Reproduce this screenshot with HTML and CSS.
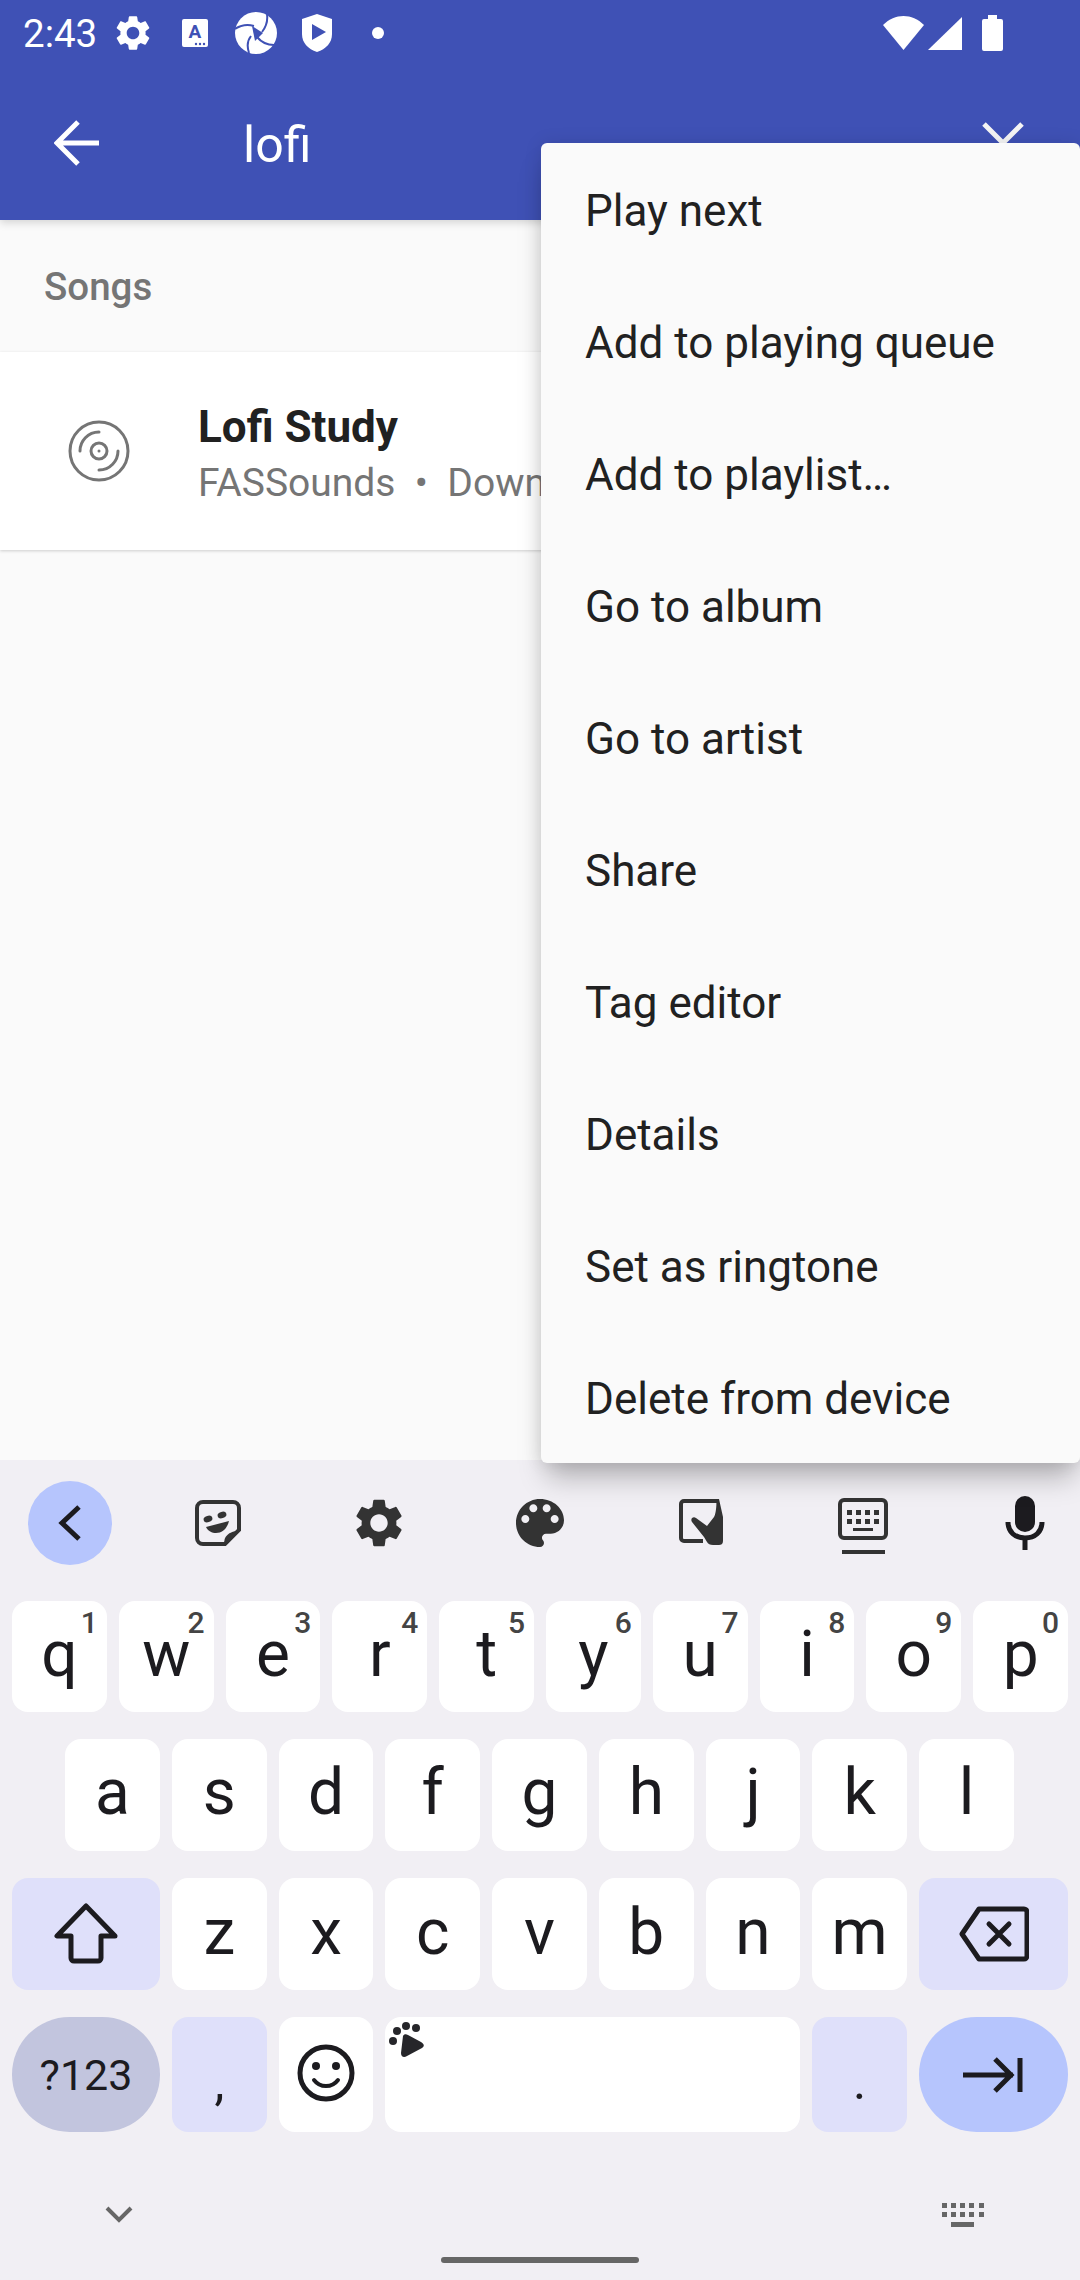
FILE: index.html
```html
<!DOCTYPE html>
<html lang="en">
<head>
    <meta charset="UTF-8">
    <meta name="viewport" content="width=device-width, initial-scale=1.0">
    <title>Search</title>
    <link rel="stylesheet" href="styles.css">
</head>
<body>
    <div class="phone">
        <header class="top">
            <div class="status">
                <span class="time">2:43</span>
                <svg class="st-gear" viewBox="0 0 24 24"><path fill="#fff" d="M19.14,12.94c0.04-0.3,0.06-0.61,0.06-0.94c0-0.32-0.02-0.64-0.07-0.94l2.03-1.58c0.18-0.14,0.23-0.41,0.12-0.61 l-1.92-3.32c-0.12-0.22-0.37-0.29-0.59-0.22l-2.39,0.96c-0.5-0.38-1.03-0.7-1.62-0.94L14.4,2.81c-0.04-0.24-0.24-0.41-0.48-0.41 h-3.84c-0.24,0-0.43,0.17-0.47,0.41L9.25,5.35C8.66,5.59,8.12,5.92,7.63,6.29L5.24,5.33c-0.22-0.08-0.47,0-0.59,0.22L2.74,8.87 C2.62,9.08,2.66,9.34,2.86,9.48l2.03,1.58C4.84,11.36,4.8,11.69,4.8,12s0.02,0.64,0.07,0.94l-2.03,1.58 c-0.18,0.14-0.23,0.41-0.12,0.61l1.92,3.32c0.12,0.22,0.37,0.29,0.59,0.22l2.39-0.96c0.5,0.38,1.03,0.7,1.62,0.94l0.36,2.54 c0.05,0.24,0.24,0.41,0.48,0.41h3.84c0.24,0,0.44-0.17,0.47-0.41l0.36-2.54c0.59-0.24,1.13-0.56,1.62-0.94l2.39,0.96 c0.22,0.08,0.47,0,0.59-0.22l1.92-3.32c0.12-0.22,0.07-0.47-0.12-0.61L19.14,12.94z M12,15.6c-1.98,0-3.6-1.62-3.6-3.6 s1.62-3.6,3.6-3.6s3.6,1.62,3.6,3.6S13.98,15.6,12,15.6z"/></svg>
                <svg class="st-card" viewBox="0 0 26 28">
                    <rect width="26" height="28" rx="2" fill="#fff"/>
                    <text x="13" y="19" text-anchor="middle" class="st-card-a">A</text>
                    <circle cx="14" cy="25" r="1.2" fill="#3f51b5"/><circle cx="18" cy="25" r="1.2" fill="#3f51b5"/><circle cx="22" cy="25" r="1.2" fill="#3f51b5"/>
                </svg>
                <svg class="st-swirl" viewBox="0 0 42 42">
                    <circle cx="21" cy="21" r="21" fill="#fff"/>
                    <path fill="#3f51b5" d="M17 14l11 7-8 8z"/>
                    <path fill="none" stroke="#3f51b5" stroke-width="2" d="M0 17c6-4 12-5 19-3M32 2c1 7-1 13-5 18M39 33c-7 0-12-2-17-8M14 41c-2-6-2-12 2-17"/>
                </svg>
                <svg class="st-shield" viewBox="0 0 32 38">
                    <path fill="#fff" d="M16 0l15 5v15c0 9-6 15-15 18C7 35 1 29 1 20V5z"/>
                    <path fill="#3f51b5" d="M11 10l14 8-14 8z"/>
                </svg>
                <span class="st-dot"></span>
                <span class="st-right">
                    <svg class="st-wifi" viewBox="0 0 41 34"><path fill="#fff" d="M0 9c12-12 29-12 41 0L20.500 34z"/></svg>
                    <svg class="st-signal" viewBox="0 0 34 33"><path fill="#fff" d="M34 0v33H0z"/></svg>
                    <svg class="st-batt" viewBox="0 0 21 36"><path fill="#fff" d="M6 0h9v4h4a2 2 0 0 1 2 2v28a2 2 0 0 1-2 2H2a2 2 0 0 1-2-2V6a2 2 0 0 1 2-2h4z"/></svg>
                </span>
            </div>
            <div class="appbar">
                <svg class="ab-back" viewBox="0 0 46 46"><path fill="none" stroke="#fff" stroke-width="5" d="M45 23H4M24 2L3 23l21 21"/></svg>
                <span class="ab-query">lofi</span>
                <svg class="ab-close" viewBox="0 0 46 46"><path fill="none" stroke="#f5f5f5" stroke-width="5" d="M4 4l38 38M42 4L4 42"/></svg>
            </div>
        </header>

        <main class="results">
            <div class="section-title">Songs</div>
            <div class="song">
                <svg class="song-icon" viewBox="0 0 66 66">
                    <g fill="none" stroke="#757575" stroke-width="3" stroke-linecap="round">
                        <circle cx="33" cy="33" r="29"/>
                        <circle cx="33" cy="33" r="8"/>
                        <path d="M14 33c0-10 8-19 19-19M52 33c0 10-8 19-19 19"/>
                    </g>
                    <circle cx="33" cy="33" r="1.500" fill="#757575"/>
                </svg>
                <div class="song-text">
                    <div class="song-name">Lofi Study</div>
                    <div class="song-sub">FASSounds &nbsp;•&nbsp; Down</div>
                </div>
            </div>
        </main>

        <div class="keyboard">
            <div class="kb-tools">
                <button class="tool-back">
                    <svg width="24" height="36" viewBox="0 0 24 36"><path fill="none" stroke="#1c1b1f" stroke-width="5" d="M21 2L4 18l17 16"/></svg>
                </button>
                <span class="tool">
                    <svg width="46" height="46" viewBox="0 0 46 46">
                        <path fill="none" stroke="#333" stroke-width="4" d="M30 44H8a6 6 0 0 1-6-6V8a6 6 0 0 1 6-6h30a6 6 0 0 1 6 6v22z"/>
                        <path fill="#333" d="M44 31L30 46c-3-9 4-15 14-15z"/>
                        <ellipse cx="13" cy="19" rx="4.500" ry="3.200" fill="#333" transform="rotate(-15 13 19)"/>
                        <ellipse cx="27" cy="15" rx="4.500" ry="3.200" fill="#333" transform="rotate(-15 27 15)"/>
                        <path fill="#333" d="M11 27l23-6c-2 8-7 12-13 12-4 0-8-2-10-6z"/>
                    </svg>
                </span>
                <span class="tool">
                    <svg width="58" height="58" viewBox="0 0 24 24"><path fill="#333" d="M19.14,12.94c0.04-0.3,0.06-0.61,0.06-0.94c0-0.32-0.02-0.64-0.07-0.94l2.03-1.58c0.18-0.14,0.23-0.41,0.12-0.61 l-1.92-3.32c-0.12-0.22-0.37-0.29-0.59-0.22l-2.39,0.96c-0.5-0.38-1.03-0.7-1.62-0.94L14.4,2.81c-0.04-0.24-0.24-0.41-0.48-0.41 h-3.84c-0.24,0-0.43,0.17-0.47,0.41L9.25,5.35C8.66,5.59,8.12,5.92,7.63,6.29L5.24,5.33c-0.22-0.08-0.47,0-0.59,0.22L2.74,8.87 C2.62,9.08,2.66,9.34,2.86,9.48l2.03,1.58C4.84,11.36,4.8,11.69,4.8,12s0.02,0.64,0.07,0.94l-2.03,1.58 c-0.18,0.14-0.23,0.41-0.12,0.61l1.92,3.32c0.12,0.22,0.37,0.29,0.59,0.22l2.39-0.96c0.5,0.38,1.03,0.7,1.62,0.94l0.36,2.54 c0.05,0.24,0.24,0.41,0.48,0.41h3.84c0.24,0,0.44-0.17,0.47-0.41l0.36-2.54c0.59-0.24,1.13-0.56,1.62-0.94l2.39,0.96 c0.22,0.08,0.47,0,0.59-0.22l1.92-3.32c0.12-0.22,0.07-0.47-0.12-0.61L19.14,12.94z M12,15.6c-1.98,0-3.6-1.62-3.6-3.6 s1.62-3.6,3.6-3.6s3.6,1.62,3.6,3.6S13.98,15.6,12,15.6z"/></svg>
                </span>
                <span class="tool">
                    <svg width="64" height="64" viewBox="0 0 24 24"><path fill="#333" d="M12 3c-4.97 0-9 4.03-9 9s4.03 9 9 9c.83 0 1.5-.67 1.5-1.5 0-.39-.15-.74-.39-1.01-.23-.26-.38-.61-.38-.99 0-.83.67-1.5 1.5-1.5H16c2.76 0 5-2.24 5-5 0-4.42-4.03-8-9-8zm-5.500 9c-.83 0-1.5-.67-1.5-1.5S5.670 9 6.500 9 8 9.670 8 10.500 7.330 12 6.500 12zm3-4C8.670 8 8 7.330 8 6.500S8.670 5 9.500 5s1.500.67 1.500 1.500S10.330 8 9.500 8zm5 0c-.83 0-1.500-.67-1.500-1.500S13.670 5 14.500 5s1.500.67 1.500 1.500S15.330 8 14.500 8zm3 4c-.83 0-1.500-.67-1.500-1.500S16.670 9 17.500 9s1.500.67 1.500 1.500-.67 1.500-1.500 1.500z"/></svg>
                </span>
                <span class="tool">
                    <svg width="46" height="48" viewBox="0 0 46 48">
                        <path fill="none" stroke="#333" stroke-width="4" d="M24 42H5a3 3 0 0 1-3-3V5a3 3 0 0 1 3-3h34"/>
                        <path fill="#333" d="M37 0h3l4 18v24c0 3-2 4-4 4h-6c-3 0-5-1-6-3l-3-5-12-15c-2-3 1-6 4-4l11 8 7-9c2-3 3-14 2-18z"/>
                    </svg>
                </span>
                <span class="tool">
                    <svg class="tool-kbd" width="50" height="58" viewBox="0 0 50 58">
                        <rect x="2" y="2" width="46" height="38" rx="4" fill="none" stroke="#333" stroke-width="4"/>
                        <g fill="#333">
                            <rect x="9" y="12" width="5" height="5"/><rect x="18" y="12" width="5" height="5"/><rect x="27" y="12" width="5" height="5"/><rect x="36" y="12" width="5" height="5"/>
                            <rect x="9" y="21" width="5" height="5"/><rect x="18" y="21" width="5" height="5"/><rect x="27" y="21" width="5" height="5"/><rect x="36" y="21" width="5" height="5"/>
                            <rect x="15" y="30" width="20" height="3"/>
                            <rect x="4" y="52" width="43" height="4"/>
                        </g>
                    </svg>
                </span>
                <span class="tool">
                    <svg width="40" height="54" viewBox="0 0 40 54">
                        <rect x="10" y="0" width="20" height="36" rx="10" fill="#1c1b1f"/>
                        <path fill="none" stroke="#1c1b1f" stroke-width="5" d="M3 26c0 10 7 16 17 16s17-6 17-16M20 42v12"/>
                    </svg>
                </span>
            </div>

            <div class="row row-top">
                <button class="key">q<sup>1</sup></button>
                <button class="key">w<sup>2</sup></button>
                <button class="key">e<sup>3</sup></button>
                <button class="key">r<sup>4</sup></button>
                <button class="key">t<sup>5</sup></button>
                <button class="key">y<sup>6</sup></button>
                <button class="key">u<sup>7</sup></button>
                <button class="key">i<sup>8</sup></button>
                <button class="key">o<sup>9</sup></button>
                <button class="key">p<sup>0</sup></button>
            </div>
            <div class="row row-home">
                <button class="key">a</button>
                <button class="key">s</button>
                <button class="key">d</button>
                <button class="key">f</button>
                <button class="key">g</button>
                <button class="key">h</button>
                <button class="key">j</button>
                <button class="key">k</button>
                <button class="key">l</button>
            </div>
            <div class="row row-wide">
                <button class="key fn">
                    <svg width="64" height="62" viewBox="0 0 64 62"><path fill="none" stroke="#1c1b1f" stroke-width="5" stroke-linejoin="round" d="M32 3L3 33h14v22a3 3 0 0 0 3 3h24a3 3 0 0 0 3-3V33h14z"/></svg>
                </button>
                <button class="key">z</button>
                <button class="key">x</button>
                <button class="key">c</button>
                <button class="key">v</button>
                <button class="key">b</button>
                <button class="key">n</button>
                <button class="key">m</button>
                <button class="key fn">
                    <svg width="70" height="56" viewBox="0 0 70 56">
                        <path fill="none" stroke="#1c1b1f" stroke-width="5" stroke-linejoin="round" d="M20 3h45a3 3 0 0 1 3 3v44a3 3 0 0 1-3 3H20L3 28z"/>
                        <path fill="none" stroke="#1c1b1f" stroke-width="5" stroke-linecap="round" d="M30 18l20 20M50 18L30 38"/>
                    </svg>
                </button>
            </div>
            <div class="row row-wide row-last">
                <button class="key pill">?123</button>
                <button class="key fn punct">,</button>
                <button class="key">
                    <svg width="58" height="58" viewBox="0 0 58 58">
                        <circle cx="29" cy="29" r="26" fill="none" stroke="#1c1b1f" stroke-width="5"/>
                        <circle cx="19" cy="22" r="4" fill="#1c1b1f"/><circle cx="39" cy="22" r="4" fill="#1c1b1f"/>
                        <path fill="none" stroke="#1c1b1f" stroke-width="4" stroke-linecap="round" d="M17 36c6 8 18 8 24 0"/>
                    </svg>
                </button>
                <button class="key space">
                    <svg class="paw" width="36" height="36" viewBox="0 0 36 36">
                        <g fill="#26262a">
                            <circle cx="8" cy="9" r="4"/><circle cx="17" cy="4" r="4"/><circle cx="27" cy="6" r="4"/><circle cx="4" cy="19" r="4"/>
                            <path d="M14 14c1-2 3-2 5-1l13 7c3 2 4 4 1 6l-15 8c-3 2-6 1-6-3z"/>
                        </g>
                    </svg>
                </button>
                <button class="key fn punct">.</button>
                <button class="key pill enter">
                    <svg width="60" height="36" viewBox="0 0 60 36"><path fill="none" stroke="#1c1b1f" stroke-width="5" d="M0 18h50M32 2l16 16-16 16M57 1v34"/></svg>
                </button>
            </div>

            <div class="kb-foot">
                <div class="foot-icons">
                    <svg width="28" height="18" viewBox="0 0 28 18"><path fill="none" stroke="#666" stroke-width="4" d="M2 2l12 12L26 2"/></svg>
                    <svg width="42" height="24" viewBox="0 0 42 24">
                        <g fill="#666">
                            <rect x="0" y="0" width="5" height="5"/><rect x="9" y="0" width="5" height="5"/><rect x="18" y="0" width="5" height="5"/><rect x="27" y="0" width="5" height="5"/><rect x="37" y="0" width="5" height="5"/>
                            <rect x="0" y="9" width="5" height="5"/><rect x="9" y="9" width="5" height="5"/><rect x="18" y="9" width="5" height="5"/><rect x="27" y="9" width="5" height="5"/><rect x="37" y="9" width="5" height="5"/>
                            <rect x="9" y="19" width="23" height="5"/>
                        </g>
                    </svg>
                </div>
                <div class="handle"></div>
            </div>
        </div>

        <ul class="menu">
            <li>Play next</li>
            <li>Add to playing queue</li>
            <li>Add to playlist…</li>
            <li>Go to album</li>
            <li>Go to artist</li>
            <li>Share</li>
            <li>Tag editor</li>
            <li>Details</li>
            <li>Set as ringtone</li>
            <li>Delete from device</li>
        </ul>
    </div>
</body>
</html>
```

FILE: styles.css
```css
body {
    margin: 0;
    font-family: Roboto, "Liberation Sans", sans-serif;
    background-color: #fafafa;
}

.phone {
    position: relative;
    width: 1080px;
    height: 2280px;
    overflow: hidden;
    display: flex;
    flex-direction: column;
}

/* top bars */
.top {
    height: 220px;
    flex-shrink: 0;
    background-color: #3f51b5;
    color: white;
    position: relative;
    z-index: 1;
    box-shadow: 0 3px 8px rgba(0, 0, 0, 0.15);
}

.status {
    height: 66px;
    display: flex;
    align-items: center;
    padding-left: 23px;
}

.time {
    font-size: 38.5px;
    width: 89px;
}

.st-gear {
    width: 42px;
    height: 42px;
}

.st-card {
    width: 26px;
    height: 28px;
    margin-left: 28px;
}

.st-card-a {
    font-size: 19px;
    font-weight: 700;
    fill: #3f51b5;
}

.st-swirl {
    width: 42px;
    height: 42px;
    margin-left: 27px;
}

.st-shield {
    width: 32px;
    height: 38px;
    margin-left: 24px;
}

.st-dot {
    width: 12px;
    height: 12px;
    border-radius: 50%;
    background-color: white;
    margin-left: 39px;
}

.st-right {
    margin-left: auto;
    margin-right: 77px;
    display: flex;
    align-items: center;
}

.st-wifi {
    width: 41px;
    height: 34px;
}

.st-signal {
    width: 34px;
    height: 33px;
    margin-left: 4px;
}

.st-batt {
    width: 21px;
    height: 36px;
    margin-left: 20px;
}

.appbar {
    height: 154px;
    display: flex;
    align-items: center;
    padding-left: 54px;
}

.ab-back {
    width: 46px;
    height: 46px;
}

.ab-query {
    font-size: 50px;
    margin-left: 143px;
    padding-top: 3px;
}

.ab-close {
    width: 46px;
    height: 46px;
    margin-left: auto;
    margin-right: 54px;
}

/* results list */
.results {
    height: 1240px;
    flex-shrink: 0;
    background-color: #fafafa;
}

.section-title {
    height: 132px;
    line-height: 134px;
    padding-left: 44px;
    font-size: 38.5px;
    font-weight: 500;
    color: #757575;
}

.song {
    height: 198px;
    display: flex;
    align-items: center;
    background-color: white;
    box-shadow: 0 1px 3px rgba(0, 0, 0, 0.18);
}

.song-icon {
    width: 66px;
    height: 66px;
    margin-left: 66px;
}

.song-text {
    margin-left: 66px;
    padding-top: 4px;
    white-space: nowrap;
}

.song-name {
    font-size: 44px;
    font-weight: 700;
    color: #212121;
}

.song-sub {
    font-size: 39px;
    color: #757575;
    margin-top: 7px;
}

/* overflow menu */
.menu {
    position: absolute;
    z-index: 2;
    top: 143px;
    left: 541px;
    width: 539px;
    margin: 0;
    padding: 0;
    list-style: none;
    background-color: #fafafa;
    border-radius: 6px;
    box-shadow: 0 20px 26px -6px rgba(0, 0, 0, 0.26), 0 0 18px rgba(0, 0, 0, 0.1);
}

.menu li {
    height: 132px;
    line-height: 137px;
    padding-left: 44px;
    font-size: 44px;
    color: #212121;
}

/* keyboard */
.keyboard {
    flex: 1;
    background-color: #f1eff4;
}

.kb-tools {
    height: 141px;
    box-sizing: border-box;
    padding: 21px 0 36px 28px;
    display: flex;
    align-items: center;
}

.kb-tools button {
    border: none;
    padding: 0;
    font: inherit;
    flex-shrink: 0;
}

.tool-back {
    width: 84px;
    height: 84px;
    border-radius: 50%;
    background-color: #b6c5fd;
    margin-right: 25px;
    display: flex;
    align-items: center;
    justify-content: center;
}

.tool {
    width: 161.4px;
    flex-shrink: 0;
    display: flex;
    justify-content: center;
}

.tool-kbd {
    margin-top: 8px;
}

.row {
    display: grid;
    gap: 12px;
    height: 111px;
    padding: 0 12px;
    margin-bottom: 27px;
}

.row-top {
    grid-template-columns: repeat(10, 1fr);
}

.row-home {
    height: 112px;
    padding: 0 66px 0 65px;
    grid-template-columns: repeat(9, 1fr);
}

.row-wide {
    height: 112px;
    grid-template-columns: 148px repeat(7, 1fr) 149px;
}

.row-last {
    height: 115px;
    margin-bottom: 0;
}

.key {
    position: relative;
    border: none;
    padding: 0 0 5px;
    margin: 0;
    min-width: 0;
    border-radius: 16px;
    background-color: white;
    color: #1c1b1f;
    font-family: Roboto, sans-serif;
    font-size: 64px;
    display: flex;
    align-items: center;
    justify-content: center;
}

.row-wide .key {
    padding-bottom: 3px;
}

.key sup {
    position: absolute;
    top: 4px;
    right: 9px;
    font-size: 30px;
    line-height: 35px;
    font-weight: 500;
    color: #444;
}

.row-wide .fn {
    padding: 0;
}

.fn {
    background-color: #dfe0fa;
}

.row-wide .punct {
    font-size: 50px;
    padding: 14px 0 0;
}

.row-wide .pill {
    background-color: #c2c5de;
    border-radius: 58px;
    font-size: 43px;
    padding: 0;
}

.row-wide .enter {
    background-color: #b6c5fd;
}

.row-wide .space {
    grid-column: span 4;
    padding: 0;
}

.paw {
    position: absolute;
    top: 5px;
    left: 4px;
}

.kb-foot {
    padding-top: 71px;
}

.foot-icons {
    height: 24px;
    display: flex;
    justify-content: space-between;
    padding: 0 96px 0 105px;
    align-items: center;
}

.handle {
    width: 198px;
    height: 6px;
    border-radius: 3px;
    background-color: #666;
    margin: 30px auto 0;
}
```
